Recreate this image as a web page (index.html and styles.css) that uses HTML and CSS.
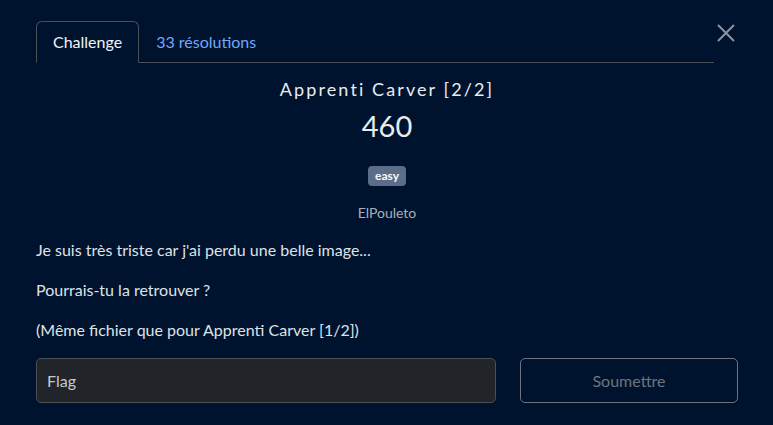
FILE: index.html
```html
<!DOCTYPE html>
<html lang="fr">
<head>
<meta charset="utf-8">
<link rel="stylesheet" href="styles.css">
</head>
<body>
<div class="modal">
  <div class="header">
    <ul class="tabs">
      <li class="tab active">Challenge</li>
      <li class="tab link">33 résolutions</li>
    </ul>
    <button class="close" aria-label="Fermer">
      <svg width="18" height="18" viewBox="0 0 18 18"><path d="M1 1L17 17M17 1L1 17" stroke="#8a94a3" stroke-width="2" fill="none"/></svg>
    </button>
  </div>
  <div class="info">
    <h2 class="title">Apprenti Carver [2/2]</h2>
    <div class="points">460</div>
    <span class="badge">easy</span>
    <div class="author">ElPouleto</div>
  </div>
  <div class="desc">
    <p>Je suis très triste car j'ai perdu une belle image...</p>
    <p>Pourrais-tu la retrouver ?</p>
    <p>(Même fichier que pour Apprenti Carver [1/2])</p>
  </div>
  <form class="submit">
    <input class="flag" type="text" placeholder="Flag">
    <button type="button" class="btn">Soumettre</button>
  </form>
</div>
</body>
</html>
```
FILE: styles.css
```css
html, body {
  margin: 0;
  padding: 0;
  background: #00132e;
  font-family: Lato, "Noto Sans", sans-serif;
  color: #dee2e6;
}
.modal {
  width: 702px;
  padding: 21px 35px 0 36px;
}
.header {
  display: flex;
  align-items: flex-start;
}
.tabs {
  list-style: none;
  margin: 0;
  padding: 0;
  display: flex;
  width: 678px;
  border-bottom: 1px solid #495057;
}
.tab {
  font-size: 16px;
  line-height: 24px;
  padding: 8px 16px;
  border: 1px solid transparent;
  border-top-left-radius: 6px;
  border-top-right-radius: 6px;
  margin-bottom: -1px;
}
.tab.active {
  color: #f1f3f5;
  border-color: #495057 #495057 #00132e;
  background: #00132e;
}
.tab.link {
  color: #6ea8fe;
}
.close {
  background: none;
  border: 0;
  padding: 0;
  margin: 3px 0 0 3px;
  width: 18px;
  height: 18px;
  display: flex;
}
.info {
  display: flex;
  flex-direction: column;
  align-items: center;
  padding-top: 14px;
}
.title {
  margin: 0;
  font-weight: 400;
  font-size: 18px;
  line-height: 24px;
  letter-spacing: 2.1px;
  color: #e9ecef;
}
.points {
  margin-top: 7px;
  font-size: 29px;
  line-height: 36px;
  color: #e9ecef;
}
.badge {
  margin-top: 22px;
  background: #5b6d88;
  color: #f8f9fa;
  font-size: 12px;
  font-weight: 700;
  line-height: 20px;
  padding: 0 7px;
  border-radius: 4px;
}
.author {
  margin-top: 17px;
  font-size: 14px;
  line-height: 20px;
  color: #a8afb8;
}
.desc {
  margin-top: 15px;
}
.desc p {
  margin: 0 0 16px;
  font-size: 16px;
  line-height: 24px;
}
.submit {
  display: flex;
  gap: 24px;
  margin-top: 14px;
}
.flag {
  box-sizing: border-box;
  width: 460px;
  height: 45px;
  background: #212529;
  border: 1px solid #495057;
  border-radius: 5px;
  padding: 0 10px;
  font-family: Lato, sans-serif;
  font-size: 16px;
  color: #dee2e6;
}
.flag::placeholder {
  color: #c4c9cf;
}
.btn {
  box-sizing: border-box;
  width: 218px;
  height: 45px;
  background: transparent;
  border: 1px solid #6c757d;
  border-radius: 5px;
  font-family: Lato, sans-serif;
  font-size: 16px;
  color: #6c757d;
}
```
